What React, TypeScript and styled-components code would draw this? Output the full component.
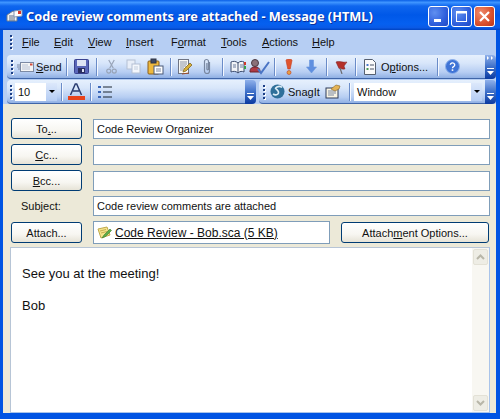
import styled, { createGlobalStyle } from 'styled-components';

const GlobalStyle = createGlobalStyle`
  html, body {
    margin: 0;
    padding: 0;
    background: #0054e3;
  }
  * {
    box-sizing: border-box;
  }
`;

const uiFont = `"Liberation Sans", Arial, sans-serif`;

const Window = styled.div`
  width: 500px;
  height: 419px;
  display: flex;
  flex-direction: column;
  overflow: hidden;
  background: #0054e3;
  font-family: ${uiFont};
  font-size: 11px;
  color: #111;
`;

const TitleBar = styled.div`
  height: 30px;
  flex: none;
  display: flex;
  align-items: center;
  padding: 2px 5px 0 6px;
  background: linear-gradient(180deg, #0a5fe6 0%, #3f95ff 8%, #0f66ee 20%, #0058e8 50%, #0560f0 80%, #0a5ae6 92%, #0042c0 100%);
`;

const TitleText = styled.div`
  flex: 1;
  margin-left: 3px;
  color: #fff;
  font-family: "Noto Sans", sans-serif;
  font-weight: 700;
  font-size: 12.75px;
  white-space: nowrap;
  text-shadow: 1px 1px 0 #0a2f9c;
`;

const CaptionButtons = styled.div`
  display: flex;
  gap: 2px;
`;

const CaptionButton = styled.div<{ $close?: boolean }>`
  width: 21px;
  height: 21px;
  display: flex;
  align-items: center;
  justify-content: center;
  border: 1px solid #fff;
  border-radius: 3px;
  background: ${({ $close }) =>
    $close
      ? 'radial-gradient(circle at 30% 30%, #ef8a6c, #d9502c 60%, #b8351a)'
      : 'radial-gradient(circle at 30% 30%, #5f8ff0, #2f5fdc 60%, #2048c4)'};
`;

const Frame = styled.div`
  flex: 1;
  min-height: 0;
  margin: 0 4px 6px 3px;
  display: flex;
  flex-direction: column;
  background: #ece9d8;
`;

const MenuBar = styled.div`
  height: 24px;
  flex: none;
  display: flex;
  align-items: center;
  background: #b6cef3;
`;

const Grip = styled.div<{ $w: number; $mr?: number }>`
  width: ${({ $w }) => $w}px;
  margin-right: ${({ $mr }) => $mr ?? 0}px;
  flex: none;
  display: flex;
  flex-direction: column;
  align-items: center;
  gap: 2px;
  & > i {
    width: 2px;
    height: 2px;
    background: #1c3f86;
    box-shadow: 1px 1px 0 #fff;
  }
`;

const MenuItem = styled.span<{ $w: number }>`
  width: ${({ $w }) => $w}px;
  flex: none;
`;

const Key = styled.span`
  text-decoration: underline;
`;

const ToolRow = styled.div`
  flex: none;
  display: flex;
  background: #b6cef3;
  padding: 1px 0 0 4px;
  height: 25px;
`;

const ToolBand = styled.div<{ $w?: number }>`
  display: flex;
  align-items: center;
  height: 24px;
  border-radius: 4px 0 0 4px;
  flex: ${({ $w }) => ($w ? `0 0 ${$w}px` : '1')};
  background: linear-gradient(180deg, #e6f0fd 0%, #d8e6fa 35%, #b6cdf2 75%, #90b0e4 100%);
  border-bottom: 1px solid #3f65a8;
`;

const ToolRowGap = styled.div`
  width: 3px;
  flex: none;
`;

const Spacer = styled.div`
  flex: 1;
`;

const Chevron = styled.div`
  width: 11px;
  flex: none;
  height: 24px;
  border-radius: 0 4px 4px 0;
  background: linear-gradient(180deg, #8fb0ea 0%, #3d6fc8 50%, #0b3aa0 100%);
  display: flex;
  flex-direction: column;
  align-items: center;
  justify-content: flex-end;
  padding-bottom: 3px;
`;

const Slot = styled.div<{ $w: number }>`
  width: ${({ $w }) => $w}px;
  flex: none;
  height: 22px;
  display: flex;
  align-items: center;
  justify-content: center;
  white-space: nowrap;
`;

const TextSlot = styled(Slot)<{ $pad: number; $gap: number }>`
  justify-content: flex-start;
  gap: ${({ $gap }) => $gap}px;
  padding-left: ${({ $pad }) => $pad}px;
`;

const Sep = styled.div<{ $w: number }>`
  width: ${({ $w }) => $w}px;
  flex: none;
  height: 18px;
  display: flex;
  justify-content: center;
  &::before {
    content: '';
    width: 1px;
    background: #6a8cc8;
    box-shadow: 1px 0 0 #f4f8ff;
  }
`;

const Combo = styled.div<{ $w: number }>`
  width: ${({ $w }) => $w}px;
  height: 18px;
  flex: none;
  display: flex;
  align-items: center;
  padding-left: 3px;
  background: #fff;
`;

const ComboValue = styled.span`
  flex: 1;
`;

const ComboArrow = styled.div`
  width: 11px;
  height: 18px;
  background: linear-gradient(180deg, #dce8fb, #b5cdf3);
  display: flex;
  align-items: center;
  justify-content: center;
  &::before {
    content: '';
    border: 3px solid transparent;
    border-top: 3px solid #000;
    border-bottom: 0;
  }
`;

const Form = styled.div`
  flex: 1;
  min-height: 0;
  display: flex;
  flex-direction: column;
  padding: 14px 6px 0 8px;
`;

const FieldRow = styled.div<{ $mb: number }>`
  display: flex;
  align-items: center;
  gap: 11px;
  margin-bottom: ${({ $mb }) => $mb}px;
`;

const XpButton = styled.div<{ $w: number }>`
  width: ${({ $w }) => $w}px;
  height: 21px;
  flex: none;
  display: flex;
  align-items: center;
  justify-content: center;
  white-space: pre;
  border: 1px solid #003c74;
  border-radius: 3px;
  background: linear-gradient(180deg, #fff 0%, #f7f6f1 60%, #e6e3d6 100%);
`;

const SubjectLabel = styled.div`
  width: 71px;
  flex: none;
  padding-left: 10px;
`;

const TextField = styled.div`
  flex: 1;
  height: 20px;
  display: flex;
  align-items: center;
  padding-left: 3px;
  background: #fff;
  border: 1px solid #7f9db9;
`;

const AttachField = styled(TextField)`
  flex: 0 0 237px;
  height: 23px;
  gap: 3px;
`;

const AttachLink = styled.span`
  font-size: 12px;
  text-decoration: underline;
`;

const Body = styled.div`
  flex: 1;
  min-height: 0;
  margin-left: -1px;
  display: flex;
  background: #fff;
  border: 1px solid #b7c5d6;
  border-right-color: #a9c4ea;
  border-bottom-color: #a9c4ea;
`;

const BodyText = styled.div`
  flex: 1;
  padding: 18px 11px;
  font-size: 13px;
  line-height: 16px;
  & > p {
    margin: 0 0 16px;
  }
`;

const ScrollBar = styled.div`
  width: 17px;
  flex: none;
  display: flex;
  flex-direction: column;
  justify-content: space-between;
  padding: 1px;
  background: #f8f7f2;
`;

const ScrollButton = styled.div`
  height: 16px;
  display: flex;
  align-items: center;
  justify-content: center;
  border: 1px solid #e3e1d6;
  border-radius: 2px;
  background: #eeede5;
`;

const Dots = ({ n = 4 }: { n?: number }) => (
  <>
    {Array.from({ length: n }, (_, i) => (
      <i key={i} />
    ))}
  </>
);

const MailIcon = () => (
  <svg width="17" height="16" viewBox="0 0 17 16">
    <path d="M1 7l6-4 4 2v8H1z" fill="#f3f3f3" stroke="#6b7a90" />
    <path d="M3 8h6M3 10h6M3 12h6" stroke="#5a6c86" />
    <path d="M8 3l8-1v6l-8 1z" fill="#fff" stroke="#8095b5" />
    <rect x="12" y="3" width="3" height="3" fill="#d8362a" />
  </svg>
);

const SendIcon = () => (
  <svg width="17" height="12" viewBox="0 0 17 12">
    <path d="M0 4h3M0 6h3M1 8h2" stroke="#7c8aa4" />
    <rect x="3.500" y="1.500" width="13" height="9" fill="#f5f5f5" stroke="#7c8aa4" />
    <path d="M5 4h6M5 6h8M5 8h8" stroke="#b7c2d6" />
    <rect x="13" y="2.500" width="2.500" height="2" fill="#d24a3a" />
  </svg>
);

const FloppyIcon = () => (
  <svg width="15" height="15" viewBox="0 0 15 15">
    <rect x=".5" y=".5" width="14" height="14" rx="1" fill="#5a66b8" stroke="#3a4290" />
    <rect x="3" y="1" width="9" height="6" fill="#dfe4f5" />
    <rect x="4" y="9" width="7" height="5" fill="#2a2e60" />
    <rect x="8" y="10" width="2" height="3" fill="#dfe3f5" />
  </svg>
);

const ScissorsIcon = () => (
  <svg width="11" height="15" viewBox="0 0 12 16" fill="none" stroke="#98a4b8" strokeWidth="1.300">
    <path d="M3 1l5 9M9 1L4 10" />
    <circle cx="3" cy="13" r="2.200" />
    <circle cx="9" cy="13" r="2.200" />
  </svg>
);

const CopyIcon = () => (
  <svg width="15" height="15" viewBox="0 0 15 15">
    <rect x="1" y="1" width="8" height="9" fill="#e8eef8" stroke="#b4c0d4" />
    <rect x="6" y="5" width="8" height="9" fill="#f4f7fc" stroke="#b4c0d4" />
    <path d="M8 8h4M8 10h4" stroke="#c3cede" />
  </svg>
);

const PasteIcon = () => (
  <svg width="17" height="17" viewBox="0 0 17 17">
    <rect x="1" y="3" width="11" height="13" rx="1" fill="#eeb93e" stroke="#8a5f1a" />
    <rect x="4" y="1" width="5" height="4" fill="#3e4a64" stroke="#2c3344" />
    <rect x="7" y="8" width="9" height="8" fill="#fff" stroke="#4a5a78" />
    <path d="M9 11h5M9 13h5" stroke="#7a88a2" />
  </svg>
);

const EditIcon = () => (
  <svg width="16" height="16" viewBox="0 0 16 16">
    <rect x="1.500" y=".5" width="10" height="14" fill="#f8f8f4" stroke="#6e7484" />
    <path d="M3 3h7M3 5h7M3 7h6M3 9h4M3 11h3" stroke="#8a93a6" />
    <path d="M6 13l1-3 6-6 2 2-6 6z" fill="#d6b03a" stroke="#7a5a14" strokeWidth=".7" />
    <path d="M5 15l7-1" stroke="#a04f2a" />
  </svg>
);

const ClipIcon = () => (
  <svg width="10" height="17" viewBox="0 0 10 17" fill="none" stroke="#77869f" strokeWidth="1.200">
    <path d="M7.500 4v9a2.500 2.500 0 0 1-5 0V3.500a2 2 0 0 1 4 0V11a.8.8 0 0 1-1.600 0V5" />
  </svg>
);

const BookIcon = () => (
  <svg width="16" height="14" viewBox="0 0 16 14">
    <path d="M1 2c2-1 5-1 7 1 2-2 4-2 6-1v10c-2-1-4-1-6 1-2-2-5-2-7-1z" fill="#f2f4f8" stroke="#3c4c6e" />
    <path d="M8 3v10" stroke="#3c4c6e" />
    <path d="M3 5h3M3 7h3M10 5h3M10 7h3" stroke="#6d7d9c" />
    <rect x="14" y="2" width="2" height="3" fill="#d03a2a" />
    <rect x="14" y="6" width="2" height="3" fill="#3aa04a" />
  </svg>
);

const ReviewIcon = () => (
  <svg width="22" height="17" viewBox="0 0 22 17">
    <circle cx="6" cy="5" r="3.500" fill="#8a7078" stroke="#4a3a44" />
    <path d="M1 14c0-4 2-5 5-5s5 1 5 5z" fill="#b03a44" stroke="#6a2028" />
    <path d="M9 11l3 4 8-11" fill="none" stroke="#4a74c4" strokeWidth="2" />
  </svg>
);

const ImportantIcon = () => (
  <svg width="8" height="16" viewBox="0 0 8 16">
    <path d="M1 1.500a3 1.500 0 0 1 6 0L5.200 10H2.800z" fill="#e0552e" stroke="#c53a1c" strokeWidth=".6" />
    <circle cx="4" cy="13.500" r="2" fill="#e8a040" stroke="#c53a1c" strokeWidth=".6" />
  </svg>
);

const DownIcon = () => (
  <svg width="11" height="15" viewBox="0 0 11 15">
    <path d="M3.500 1h4v7h3l-5 6-5-6h3z" fill="#5f8fe0" stroke="#6a96dc" strokeWidth=".6" />
  </svg>
);

const FlagIcon = () => (
  <svg width="13" height="14" viewBox="0 0 13 14">
    <path d="M1 2c3-1.500 7 1 11 0l-3 4 1 3c-3 .5-4-.5-6-.5z" fill="#b4302a" stroke="#7a1e1e" strokeWidth=".5" />
    <path d="M5 8l2 6" stroke="#6a6a70" strokeWidth="1.200" />
  </svg>
);

const OptionsIcon = () => (
  <svg width="12" height="16" viewBox="0 0 12 16">
    <path d="M.5.5h8l3 3v12H.5z" fill="#fafafa" stroke="#555f70" />
    <rect x="2.500" y="5" width="2" height="2" fill="#4a78c8" />
    <rect x="2.500" y="9" width="2" height="2" fill="#4a9a58" />
    <path d="M6 6h4M6 10h4" stroke="#4a5468" />
  </svg>
);

const HelpIcon = () => (
  <svg width="15" height="15" viewBox="0 0 15 15">
    <circle cx="7.500" cy="7.500" r="7" fill="#3f74d6" stroke="#8cb0ea" />
    <path d="M5.300 5.800a2.200 2 0 1 1 3.200 1.900c-.7.400-1 .8-1 1.600" fill="none" stroke="#fff" strokeWidth="1.400" />
    <rect x="6.700" y="10.300" width="1.600" height="1.600" fill="#fff" />
  </svg>
);

const FontColorIcon = () => (
  <svg width="17" height="18" viewBox="0 0 17 18">
    <path d="M2.500 12L7.300 1h1.400l4.800 11M5 8h6" fill="none" stroke="#2a3c70" strokeWidth="1.500" />
    <rect y="13" width="17" height="4" fill="#e8431c" />
  </svg>
);

const ListIcon = () => (
  <svg width="14" height="14" viewBox="0 0 14 14">
    <path d="M5 2h9M5 7h9M5 12h9" stroke="#1a2430" />
    <rect x="0" y="1" width="3" height="2" fill="#3a66b8" />
    <rect x="0" y="6" width="3" height="2" fill="#3a66b8" />
    <rect x="0" y="11" width="3" height="2" fill="#3a66b8" />
  </svg>
);

const SnagitIcon = () => (
  <svg width="15" height="15" viewBox="0 0 15 15">
    <circle cx="7.500" cy="7.500" r="7" fill="#2f6f9a" />
    <path d="M3 10c3 2 7 0 5-3S4 5 7 3c2-1 4-.5 5 .5" fill="none" stroke="#dcecf6" strokeWidth="1.600" />
  </svg>
);

const SnagPasteIcon = () => (
  <svg width="16" height="15" viewBox="0 0 16 15">
    <rect x="1" y="4" width="12" height="10" fill="#f8f4e4" stroke="#2c3a58" />
    <path d="M3 7h8M3 9h8M3 11h6" stroke="#7a88a2" />
    <path d="M6 5l5-4 4 1-1 3-4 2z" fill="#e4b458" stroke="#8a6424" strokeWidth=".6" />
  </svg>
);

const AttachIcon = () => (
  <svg width="15" height="14" viewBox="0 0 15 14">
    <path d="M1 3l9-2 3 8-9 3z" fill="#f4e48a" stroke="#c0a84c" />
    <path d="M3 5l6-1.500M4 7l6-1.500" stroke="#c7ad52" />
    <path d="M5 12l2-3 6-6 1.500 1.500-6 6z" fill="#5cae48" stroke="#3a7a30" strokeWidth=".6" />
  </svg>
);

const ChevronMarks = ({ double }: { double?: boolean }) => (
  <svg width="7" height={double ? 21 : 8} viewBox={double ? '0 0 7 21' : '0 0 7 8'}>
    {double && <path d="M0 1l2 2-2 2zM4 1l2 2-2 2z" fill="#fff" />}
    <g transform={double ? 'translate(0 13)' : undefined}>
      <rect y="0" width="7" height="1" fill="#fff" />
      <path d="M0 3h7L3.500 7z" fill="#fff" />
    </g>
  </svg>
);

const ScrollChevron = ({ down }: { down?: boolean }) => (
  <svg width="9" height="6" viewBox="0 0 9 6">
    <path d={down ? 'M1 1l3.500 3.500L8 1' : 'M1 5l3.500-3.500L8 5'} fill="none" stroke="#b8b6a8" strokeWidth="2" />
  </svg>
);

const App = () => (
  <Window>
    <GlobalStyle />
    <TitleBar>
      <MailIcon />
      <TitleText>Code review comments are attached - Message (HTML)</TitleText>
      <CaptionButtons>
        <CaptionButton>
          <svg width="13" height="13" viewBox="0 0 13 13">
            <rect x="2" y="9" width="7" height="3" fill="#fff" />
          </svg>
        </CaptionButton>
        <CaptionButton>
          <svg width="13" height="13" viewBox="0 0 13 13" fill="none" stroke="#fff">
            <rect x="1.500" y="1.500" width="10" height="10" />
            <path d="M1 2.500h11" strokeWidth="2" />
          </svg>
        </CaptionButton>
        <CaptionButton $close>
          <svg width="13" height="13" viewBox="0 0 13 13">
            <path d="M2 2l9 9M11 2l-9 9" stroke="#fff" strokeWidth="2.200" />
          </svg>
        </CaptionButton>
      </CaptionButtons>
    </TitleBar>

    <Frame>
      <MenuBar>
        <Grip $w={15} $mr={4}>
          <Dots />
        </Grip>
        <MenuItem $w={32}><Key>F</Key>ile</MenuItem>
        <MenuItem $w={34}><Key>E</Key>dit</MenuItem>
        <MenuItem $w={38}><Key>V</Key>iew</MenuItem>
        <MenuItem $w={45}><Key>I</Key>nsert</MenuItem>
        <MenuItem $w={50}>F<Key>o</Key>rmat</MenuItem>
        <MenuItem $w={41}><Key>T</Key>ools</MenuItem>
        <MenuItem $w={50}><Key>A</Key>ctions</MenuItem>
        <MenuItem $w={40}><Key>H</Key>elp</MenuItem>
      </MenuBar>

      <ToolRow>
        <ToolBand>
          <Grip $w={9}>
            <Dots />
          </Grip>
          <TextSlot $w={46} $pad={1} $gap={2}>
            <SendIcon />
            <span><Key>S</Key>end</span>
          </TextSlot>
          <Sep $w={8} />
          <Slot $w={22}><FloppyIcon /></Slot>
          <Sep $w={8} />
          <Slot $w={22}><ScissorsIcon /></Slot>
          <Slot $w={22}><CopyIcon /></Slot>
          <Slot $w={22}><PasteIcon /></Slot>
          <Sep $w={8} />
          <Slot $w={22}><EditIcon /></Slot>
          <Slot $w={22}><ClipIcon /></Slot>
          <Sep $w={9} />
          <Slot $w={22}><BookIcon /></Slot>
          <Slot $w={22}><ReviewIcon /></Slot>
          <Sep $w={7} />
          <Slot $w={22}><ImportantIcon /></Slot>
          <Slot $w={22}><DownIcon /></Slot>
          <Sep $w={8} />
          <Slot $w={22}><FlagIcon /></Slot>
          <Sep $w={7} />
          <TextSlot $w={74} $pad={5} $gap={5}>
            <OptionsIcon />
            <span>O<Key>p</Key>tions...</span>
          </TextSlot>
          <Sep $w={8} />
          <Slot $w={22}><HelpIcon /></Slot>
          <Spacer />
        </ToolBand>
        <Chevron>
          <ChevronMarks double />
        </Chevron>
      </ToolRow>

      <ToolRow>
        <ToolBand $w={238}>
          <Grip $w={8}>
            <Dots />
          </Grip>
          <Combo $w={42}>
            <ComboValue>10</ComboValue>
            <ComboArrow />
          </Combo>
          <Sep $w={8} />
          <Slot $w={22}><FontColorIcon /></Slot>
          <Sep $w={7} />
          <Slot $w={22}><ListIcon /></Slot>
          <Spacer />
        </ToolBand>
        <Chevron>
          <ChevronMarks />
        </Chevron>
        <ToolRowGap />
        <ToolBand>
          <Grip $w={9}>
            <Dots />
          </Grip>
          <TextSlot $w={54} $pad={2} $gap={3}>
            <SnagitIcon />
            <span>SnagIt</span>
          </TextSlot>
          <Slot $w={22}><SnagPasteIcon /></Slot>
          <Sep $w={10} />
          <Combo $w={128}>
            <ComboValue>Window</ComboValue>
            <ComboArrow />
          </Combo>
          <Spacer />
        </ToolBand>
        <Chevron>
          <ChevronMarks />
        </Chevron>
      </ToolRow>

      <Form>
        <FieldRow $mb={5}>
          <XpButton $w={71}>To<Key>.</Key>..</XpButton>
          <TextField>Code Review Organizer</TextField>
        </FieldRow>
        <FieldRow $mb={5}>
          <XpButton $w={71}><Key>C</Key>c...</XpButton>
          <TextField />
        </FieldRow>
        <FieldRow $mb={5}>
          <XpButton $w={71}><Key>B</Key>cc...</XpButton>
          <TextField />
        </FieldRow>
        <FieldRow $mb={5}>
          <SubjectLabel>Sub<Key>j</Key>ect:</SubjectLabel>
          <TextField>Code review comments are attached</TextField>
        </FieldRow>
        <FieldRow $mb={3}>
          <XpButton $w={71}>Attach...</XpButton>
          <AttachField>
            <AttachIcon />
            <AttachLink>Code Review - Bob.sca (5 KB)</AttachLink>
          </AttachField>
          <XpButton $w={148}>Attach<Key>m</Key>ent Options...</XpButton>
        </FieldRow>
        <Body>
          <BodyText>
            <p>See you at the meeting!</p>
            <p>Bob</p>
          </BodyText>
          <ScrollBar>
            <ScrollButton><ScrollChevron /></ScrollButton>
            <ScrollButton><ScrollChevron down /></ScrollButton>
          </ScrollBar>
        </Body>
      </Form>
    </Frame>
  </Window>
);

export default App;
